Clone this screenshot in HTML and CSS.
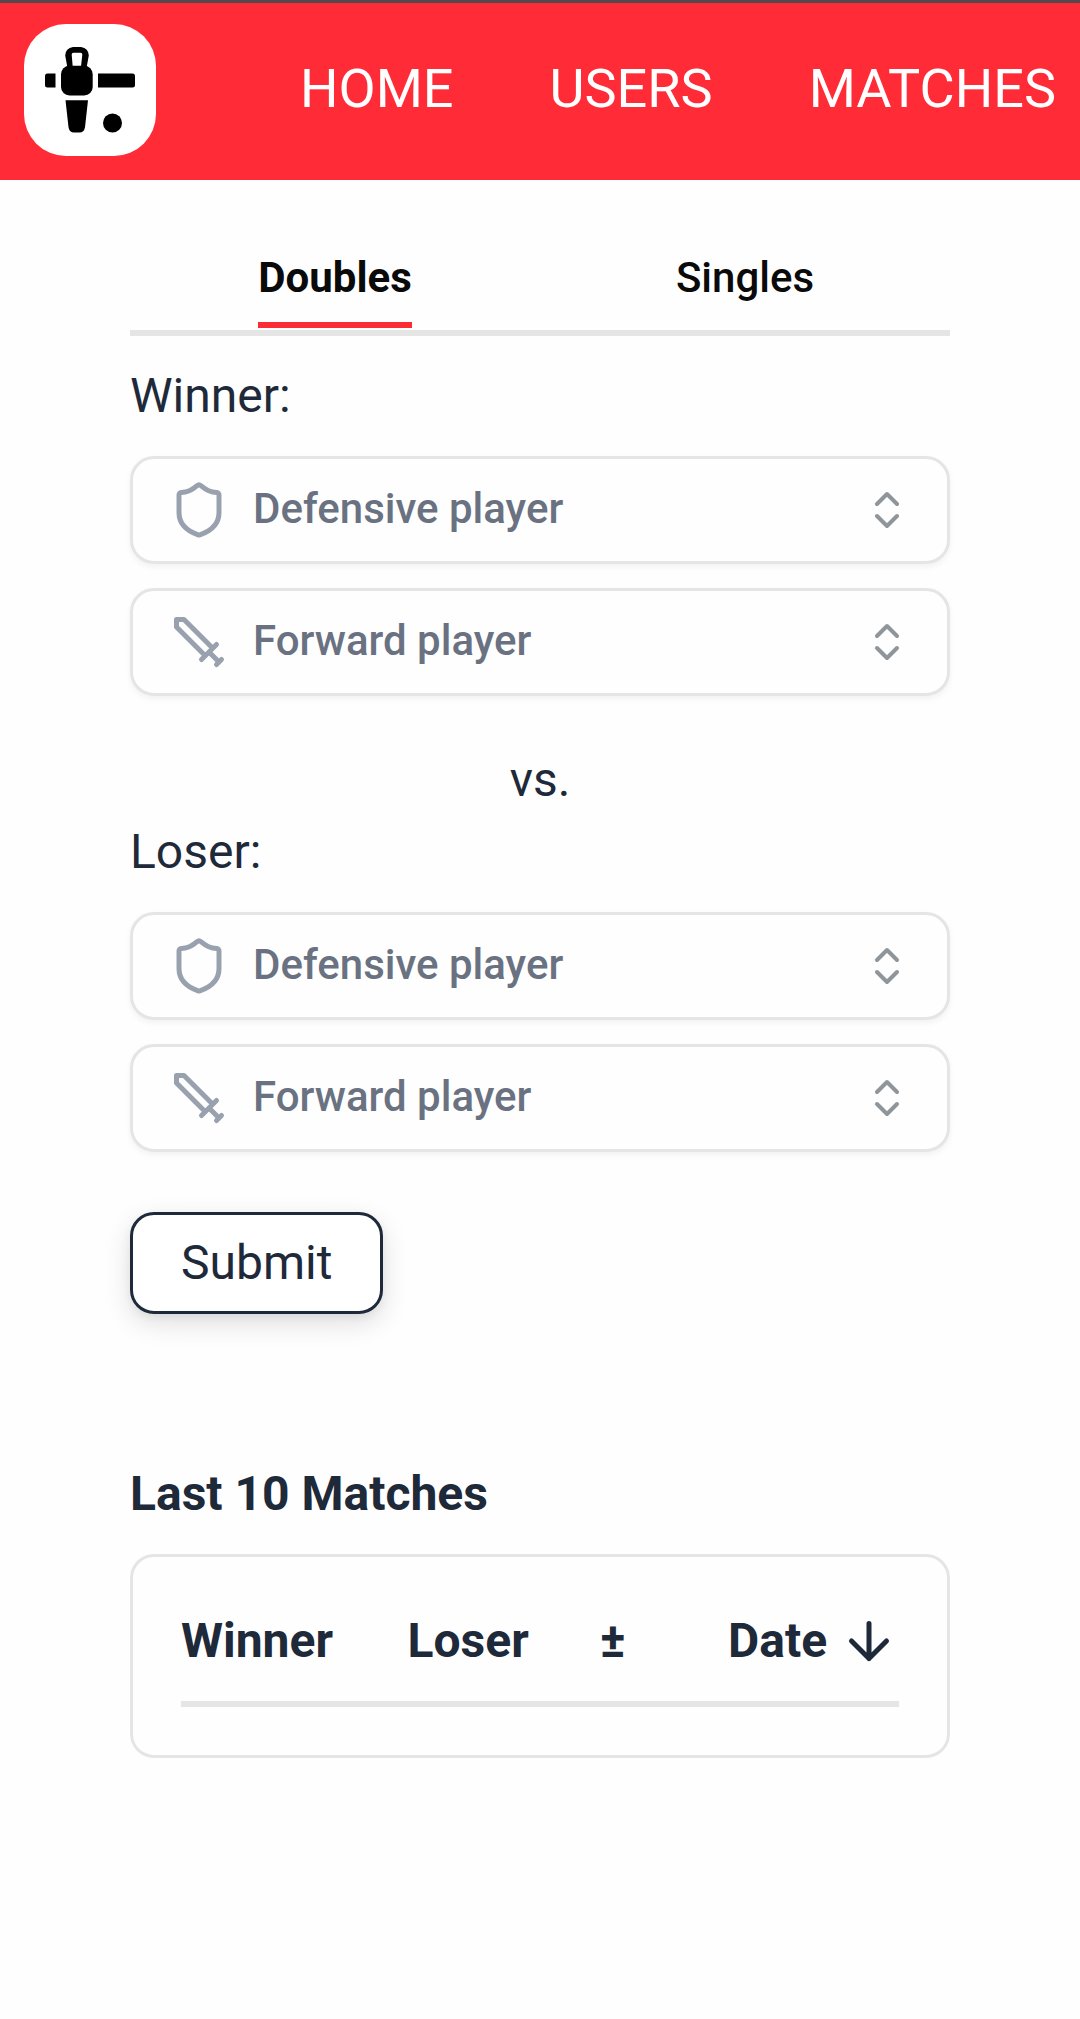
FILE: index.html
```html
<!DOCTYPE html>
<html lang="en">
<head>
<meta charset="utf-8">
<title>Table Football</title>
<link rel="stylesheet" href="styles.css">
</head>
<body>
<svg class="sprite" aria-hidden="true">
  <symbol id="shield" viewBox="0 0 24 24"><path d="M20 13c0 5-3.5 7.5-7.66 8.95a1 1 0 0 1-.67-.01C7.5 20.5 4 18 4 13V6a1 1 0 0 1 1-1c2 0 4.5-1.2 6.24-2.72a1.17 1.17 0 0 1 1.52 0C14.51 3.81 17 5 19 5a1 1 0 0 1 1 1z"/></symbol>
  <symbol id="sword" viewBox="0 0 24 24"><path d="M14.5 17.5 3 6V3h3l11.5 11.5M13 19l6-6M16 16l4 4M19 21l2-2"/></symbol>
  <symbol id="updown" viewBox="0 0 24 24"><path d="m7 15 5 5 5-5M7 9l5-5 5 5"/></symbol>
</svg>

<header class="header">
  <a class="logo">
    <svg viewBox="0 0 132 132">
      <path fill-rule="evenodd" d="M49 23h8q7.500 1 7.800 8.500L62.500 44h-19L41.200 31.500Q41.500 24 49 23zM49.500 28.700q-2 0-1.800 2L48.700 42.500h8.300l1.300-11.800q.2-2-1.800-2z"/>
      <rect x="37" y="41.700" width="31.700" height="29.800" rx="8.500"/>
      <path d="M31.500 49.500v14h-8q-2.500 0-2.500-2.500v-9q0-2.500 2.500-2.500zM74 49.500h34.500q2.500 0 2.500 2.500v9q0 2.500-2.500 2.500H74zM41.500 76.200h22.500l-3 27q-1 5.300-5.500 5.300h-5.500q-4.500 0-5.500-5.300z"/>
      <circle cx="88.500" cy="99" r="9.500"/>
    </svg>
  </a>
  <nav class="nav"><a>HOME</a><a>USERS</a><a>MATCHES</a></nav>
</header>

<main class="main">
  <div class="tabs">
    <div class="tab"><span class="tab-label active">Doubles</span></div>
    <div class="tab"><span class="tab-label">Singles</span></div>
  </div>

  <form class="form">
    <div class="label">Winner:</div>
    <div class="selects">
      <div class="select"><svg class="icon"><use href="#shield"/></svg><span class="placeholder">Defensive player</span><svg class="chevrons"><use href="#updown"/></svg></div>
      <div class="select"><svg class="icon"><use href="#sword"/></svg><span class="placeholder">Forward player</span><svg class="chevrons"><use href="#updown"/></svg></div>
    </div>
    <div class="versus">vs.</div>
    <div class="label">Loser:</div>
    <div class="selects">
      <div class="select"><svg class="icon"><use href="#shield"/></svg><span class="placeholder">Defensive player</span><svg class="chevrons"><use href="#updown"/></svg></div>
      <div class="select"><svg class="icon"><use href="#sword"/></svg><span class="placeholder">Forward player</span><svg class="chevrons"><use href="#updown"/></svg></div>
    </div>
    <button class="submit" type="button">Submit</button>
  </form>

  <h2 class="title">Last 10 Matches</h2>
  <section class="card">
    <div class="row">
      <span>Winner</span><span>Loser</span><span>±</span>
      <span class="date">Date<svg class="arrow" viewBox="0 0 24 24"><path d="M12 5v14M19 12l-7 7-7-7"/></svg></span>
    </div>
  </section>
</main>
</body>
</html>
```
FILE: styles.css
```css
* { box-sizing: border-box; }

body {
  margin: 0;
  min-height: 2019px;
  background: #fefefe;
  color: #1e2939;
  font: 400 48px/72px Roboto, sans-serif;
}

.sprite { display: none; }

svg {
  flex: none;
  fill: none;
  stroke: currentColor;
  stroke-width: 2;
  stroke-linecap: round;
  stroke-linejoin: round;
}

.header {
  display: flex;
  align-items: center;
  justify-content: space-between;
  height: 180px;
  padding: 0 24px;
  border-top: 3px solid #54474d;
  background: #ff2c37;
}

.logo {
  width: 132px;
  height: 132px;
  border-radius: 42px;
  background: #fff;
  overflow: hidden;
  margin-top: -3px;
}

.logo svg {
  display: block;
  width: 132px;
  height: 132px;
  fill: #000;
  stroke: none;
}

.nav {
  display: flex;
  gap: 96px;
  margin-top: -6px;
  color: #fff;
  font-size: 54px;
  line-height: 84px;
}

.main {
  width: 820px;
  margin: 0 auto;
}

.tabs {
  display: grid;
  grid-template-columns: 1fr 1fr;
  height: 156px;
  padding-top: 68px;
  border-bottom: 6px solid #e5e5e5;
}

.tab {
  display: flex;
  justify-content: center;
}

.tab-label {
  height: 80px;
  color: #0a0a0a;
  font-size: 42px;
  font-weight: 500;
  line-height: 60px;
}

.active {
  border-bottom: 6px solid #fb2c36;
  font-weight: 700;
}

.form { padding-top: 24px; }

.selects {
  display: grid;
  gap: 24px;
  padding-top: 24px;
}

.select {
  display: flex;
  align-items: center;
  gap: 24px;
  height: 108px;
  padding: 0 36px;
  border: 3px solid #e5e5e5;
  border-radius: 24px;
  box-shadow: 0 3px 6px rgba(0, 0, 0, .05);
  background: #fefefe;
  color: #6a7282;
  font-size: 42px;
  font-weight: 500;
  line-height: 60px;
}

.placeholder { padding-bottom: 2px; }

.icon {
  width: 60px;
  height: 60px;
  color: #99a1af;
}

.chevrons {
  width: 48px;
  height: 48px;
  margin-left: auto;
  color: #8e959b;
}

.versus {
  padding-top: 48px;
  text-align: center;
}

.submit {
  display: block;
  margin: 60px 0 0;
  padding: 12px 48px;
  border: 3px solid #1e2939;
  border-radius: 24px;
  background: #fff;
  box-shadow: 0 9px 27px rgba(0, 0, 0, .13), 0 3px 9px rgba(0, 0, 0, .05);
  color: inherit;
  font: inherit;
}

.title {
  margin: 144px 0 24px;
  font: inherit;
  font-weight: 700;
}

.card {
  height: 204px;
  padding: 48px;
  border: 3px solid #e5e5e5;
  border-radius: 24px;
}

.row {
  display: grid;
  grid-template-columns: 226.5px 192.5px 128px 1fr;
  height: 102px;
  border-bottom: 6px solid #e5e5e5;
  font-weight: 700;
}

.date {
  display: flex;
  align-items: center;
  gap: 12px;
  height: 72px;
}

.arrow {
  width: 60px;
  height: 60px;
}
```
